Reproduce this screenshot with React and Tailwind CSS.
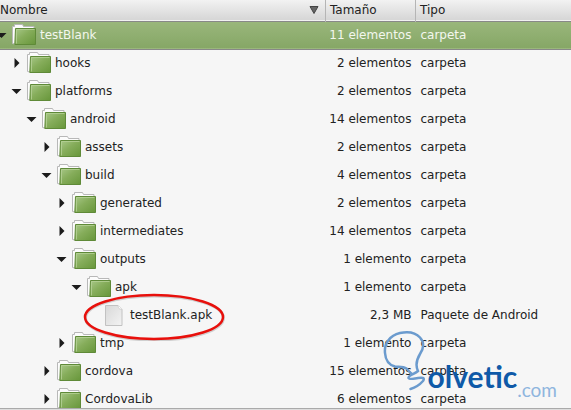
import React from 'react';

const rows = [
  { name: 'testBlank', indent: 'pl-0', open: true, size: '11 elementos', type: 'carpeta', selected: true },
  { name: 'hooks', indent: 'pl-[15px]', size: '2 elementos', type: 'carpeta' },
  { name: 'platforms', indent: 'pl-[15px]', open: true, size: '2 elementos', type: 'carpeta' },
  { name: 'android', indent: 'pl-[30px]', open: true, size: '14 elementos', type: 'carpeta' },
  { name: 'assets', indent: 'pl-[45px]', size: '2 elementos', type: 'carpeta' },
  { name: 'build', indent: 'pl-[45px]', open: true, size: '4 elementos', type: 'carpeta' },
  { name: 'generated', indent: 'pl-[60px]', size: '2 elementos', type: 'carpeta' },
  { name: 'intermediates', indent: 'pl-[60px]', size: '14 elementos', type: 'carpeta' },
  { name: 'outputs', indent: 'pl-[60px]', open: true, size: '1 elemento', type: 'carpeta' },
  { name: 'apk', indent: 'pl-[75px]', open: true, size: '1 elemento', type: 'carpeta' },
  { name: 'testBlank.apk', indent: 'pl-[90px]', file: true, size: '2,3 MB', type: 'Paquete de Android' },
  { name: 'tmp', indent: 'pl-[60px]', size: '1 elemento', type: 'carpeta' },
  { name: 'cordova', indent: 'pl-[45px]', size: '15 elementos', type: 'carpeta' },
  { name: 'CordovaLib', indent: 'pl-[45px]', size: '6 elementos', type: 'carpeta' },
];

const FolderIcon = () => (
  <svg viewBox="0 0 24 24" className="h-6 w-6 shrink-0" aria-hidden="true">
    <defs>
      <linearGradient id="folder" x1="0" y1="0" x2="1" y2="1">
        <stop offset="0" stopColor="#a9c98a" />
        <stop offset="0.45" stopColor="#86ad5b" />
        <stop offset="1" stopColor="#67963a" />
      </linearGradient>
    </defs>
    <path d="M.5 20.500V3.500h2V1.500h8l1 2h10.500V19L3 21z" fill="#fcfcfc" stroke="#b8b8b8" />
    <path d="M3.500 5.500h20v16H2.800z" fill="url(#folder)" stroke="#5f8a38" />
    <path d="M4.500 20.500V6.500h18" fill="none" stroke="#b5d196" opacity="0.8" />
  </svg>
);

const FileIcon = () => (
  <svg viewBox="0 0 24 24" className="h-6 w-6 shrink-0" aria-hidden="true">
    <defs>
      <linearGradient id="paper" x1="0" y1="0" x2="1" y2="1">
        <stop offset="0" stopColor="#d8d8d8" />
        <stop offset="1" stopColor="#f3f3f3" />
      </linearGradient>
    </defs>
    <path d="M3.500 2.500h12.500l4 4v16H3.500z" fill="url(#paper)" stroke="#c2c2c2" />
    <path d="M16 2.500c.5 2 0 3.500 4 4" fill="#fff" stroke="#d0d0d0" />
  </svg>
);

const Arrow = ({ open }) => (
  <svg viewBox="0 0 12 12" className="h-3 w-3" aria-hidden="true">
    <path d={open ? 'M.5 4h10l-5 5z' : 'M3.500 1v10l5-5z'} fill="#1c1c1c" />
  </svg>
);

const Row = ({ name, indent, open, file, size, type, selected }) => (
  <tr
    className={
      selected
        ? 'h-7 border-b border-[#888] bg-linear-to-b from-[#9ab77c] to-[#86a766] text-[#f3f7ee]'
        : 'h-7 text-[#222]'
    }
  >
    <td className={indent}>
      <div className="relative flex items-center">
        {file ? (
          <span className="w-3" />
        ) : (
          <button type="button" aria-label={name} aria-expanded={!!open} className="-ml-1 w-4">
            <Arrow open={open} />
          </button>
        )}
        {file ? <FileIcon /> : <FolderIcon />}
        <span className="ml-1">{name}</span>
        {file && (
          <svg viewBox="0 0 144 50" className="absolute -top-3 -left-2 h-[50px] w-36" aria-hidden="true">
            <ellipse cx="72.500" cy="27" rx="69" ry="22" fill="none" stroke="#888" strokeWidth="3" opacity="0.35" />
            <ellipse cx="72" cy="26" rx="69" ry="22" fill="none" stroke="#e8100c" strokeWidth="2.500" />
          </svg>
        )}
      </div>
    </td>
    <td className="pr-1 text-right">{size}</td>
    <td className="pl-[5px]">{type}</td>
  </tr>
);

const Watermark = () => (
  <div className="absolute right-3.5 bottom-2 flex items-end font-['Lato',sans-serif]">
    <svg viewBox="0 0 44 62" className="mb-2.5 h-[62px] w-11" fill="none" aria-hidden="true">
      <path
        d="M28.500 59c5-1.500 9-4 12.500-8 2.500-3.500-1-3.500-5-3-4 .5-9 2-9.500 0C26 45.500 33 44 36 41c-3-6-1-12 2-17 4-6 4-12 0-16.500C33 2 25 1.500 18 3 8 5.500 2 13 3 23c.5 7 4 12 10 13.500 4 .5 8-.5 11.500 2 2 1.500 2.500 3.500 5 5"
        stroke="#6b9bce"
        strokeWidth="2.500"
        strokeLinecap="round"
      />
    </svg>
    <span className="mb-2.5 ml-0.5 text-[30px] leading-8 font-bold text-[#0f5aa8]">olvetic</span>
    <span className="text-[19px] leading-6 text-[#8fb5de]">.com</span>
  </div>
);

export default function App() {
  return (
    <main className="relative flex h-screen flex-col overflow-hidden bg-[#f6f6f6] font-['DejaVu_Sans',sans-serif] text-xs">
      <div className="flex-1 overflow-hidden border-b border-[#aaa]">
        <table className="w-full table-fixed border-collapse">
          <thead>
            <tr className="h-[21px] border-b border-[#888] bg-linear-to-b from-[#f2f2f2] to-[#d6d6d6] text-left text-[#222]">
              <th className="w-[57%] border-r border-[#b5b5b5] pr-[6px] font-normal">
                <div className="flex items-center justify-between">
                  <span>Nombre</span>
                  <svg viewBox="0 0 10 8" className="h-2 w-[10px]" aria-hidden="true">
                    <path d="M1 .5h8L5 7.500z" fill="#666" stroke="#444" />
                  </svg>
                </div>
              </th>
              <th className="w-[90px] border-r border-[#b5b5b5] pl-1 font-normal">Tamaño</th>
              <th className="pl-1 font-normal">Tipo</th>
            </tr>
          </thead>
          <tbody>
            {rows.map((row) => (
              <Row key={row.name} {...row} />
            ))}
          </tbody>
        </table>
      </div>
      <div className="h-px bg-[#ddd]" />
      <Watermark />
    </main>
  );
}
